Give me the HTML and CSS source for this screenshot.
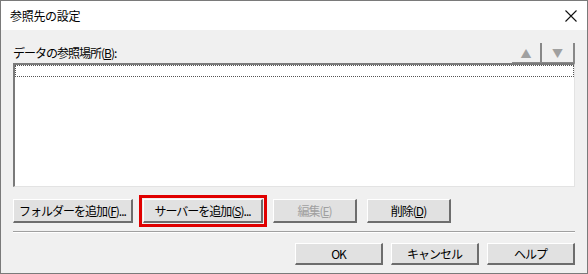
FILE: index.html
```html
<!DOCTYPE html>
<html lang="ja">
<head>
  <meta charset="UTF-8">
  <title>参照先の設定</title>
  <link rel="stylesheet" href="styles.css">
</head>
<body>
  <div class="window">
    <div class="titlebar">
      <span class="title">参照先の設定</span>
      <svg class="close" width="12" height="12" viewBox="0 0 12 12">
        <path d="M0.5 0.5 L11.5 11.5 M11.5 0.5 L0.5 11.5" stroke="#111" stroke-width="1.1" fill="none"/>
      </svg>
    </div>

    <div class="content">
      <div class="label-row">
        <span class="label">データの参照場所(<u>B</u>):</span>
        <div class="arrows">
          <div class="arrow">▲</div>
          <div class="arrow">▼</div>
        </div>
      </div>

      <div class="listbox">
        <div class="focus-row"></div>
      </div>

      <div class="actions">
        <div class="btn wide">フォルダーを追加(<u>F</u>)...</div>
        <div class="btn wide marked">サーバーを追加(<u>S</u>)...</div>
        <div class="btn small disabled">編集(<u>E</u>)</div>
        <div class="btn small">削除(<u>D</u>)</div>
      </div>

      <div class="separator"></div>

      <div class="footer">
        <div class="btn">OK</div>
        <div class="btn">キャンセル</div>
        <div class="btn">ヘルプ</div>
      </div>
    </div>
  </div>
</body>
</html>
```

FILE: styles.css
```css
body {
  margin: 0;
  font-family: "Noto Sans CJK JP", sans-serif;
  font-size: 12px;
  color: #000;
}
.window {
  width: 588px;
  height: 274px;
  box-sizing: border-box;
  border: 1px solid #7a7a7a;
  background: #f0f0f0;
}
.titlebar {
  height: 29px;
  background: #fff;
  display: flex;
  align-items: center;
  justify-content: space-between;
  padding: 0 9px 0 9px;
}
.title {
  font-size: 12px;
  letter-spacing: -0.3px;
}
.close {
  margin-right: 1px;
}
.content {
  padding: 12px 12px 0 12px;
}
.label-row {
  height: 21px;
  display: flex;
  align-items: center;
  justify-content: space-between;
}
.label {
  letter-spacing: -1px;
}
u {
  text-decoration: underline;
}
.arrows {
  display: flex;
  height: 20px;
  margin-top: 1px;
}
.arrow {
  height: 19px;
  display: flex;
  align-items: center;
  justify-content: center;
  color: #a0a0a0;
  font-size: 11px;
  border-right: 2px solid #888;
  border-bottom: 1px solid #888;
  width: 28px;
}
.arrow + .arrow {
  width: 31px;
}
.listbox {
  height: 121px;
  background: #fff;
  border-top: 2px solid #7a7a7a;
  border-left: 2px solid #7a7a7a;
  border-right: 1px solid #e3e3e3;
  border-bottom: 1px solid #e3e3e3;
}
.focus-row {
  height: 10px;
  border: 1px dotted #555;
}
.actions {
  display: flex;
  gap: 10px;
  margin-top: 12px;
}
.btn {
  width: 85px;
  height: 24px;
  display: flex;
  align-items: center;
  justify-content: center;
  white-space: nowrap;
  letter-spacing: -1px;
  background: #e1e1e1;
  border-top: 1px solid #fff;
  border-left: 1px solid #fff;
  border-right: 2px solid #6d6d6d;
  border-bottom: 2px solid #6d6d6d;
  box-sizing: border-box;
}
.btn.wide {
  width: 120px;
}
.btn.small {
  width: 84px;
}
.btn.disabled {
  color: #a0a0a0;
}
.btn.marked {
  outline: 3px solid #e00000;
  outline-offset: 1px;
}
.separator {
  margin-top: 8px;
  border-top: 1px solid #a0a0a0;
  border-bottom: 1px solid #fff;
}
.footer {
  display: flex;
  justify-content: flex-end;
  gap: 8px;
  margin-top: 10px;
}
.footer .btn {
  width: 88px;
  height: 22px;
}
```
